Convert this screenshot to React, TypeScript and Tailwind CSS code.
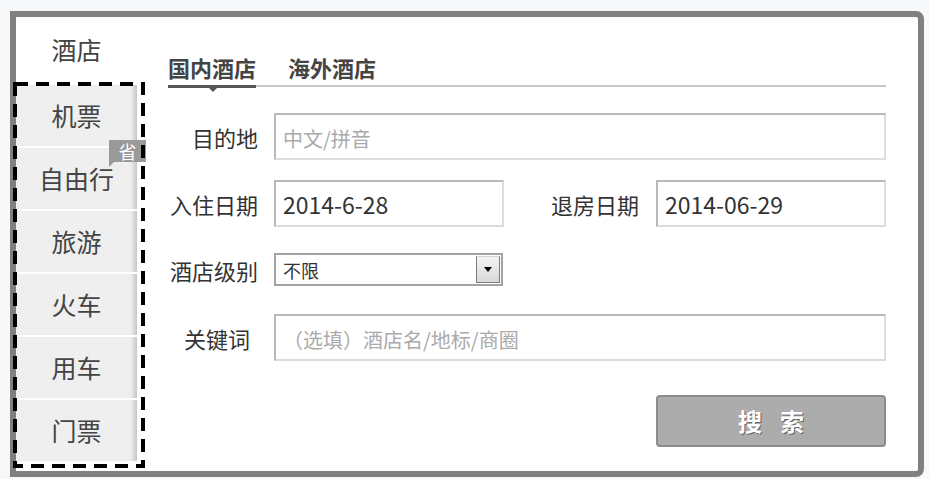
import React from "react";

const sideTabs = ["机票", "自由行", "旅游", "火车", "用车", "门票"];

const inputBox =
    "h-[47px] border-2 border-t-[#b9b9b9] border-l-[#b9b9b9] border-r-[#dcdcdc] border-b-[#dcdcdc] bg-white px-[7px] text-[23px] text-[#333] outline-none placeholder:text-[20px] placeholder:text-[#aaa]";

const Label: React.FC<{ text: string; className?: string }> = ({ text, className }) => (
    <span className={"w-[90px] shrink-0 text-right text-[22px] leading-[30px] text-[#333] " + (className || "")}>
        {text}
    </span>
);

const SideTab: React.FC<{ name: string }> = ({ name }) => (
    <div className="relative flex h-[63px] items-center justify-center border-t-2 border-white bg-[#efefef] text-[25px] text-[#444] shadow-[inset_-6px_0_4px_-3px_#c4c4c4]">
        {name}
        {name === "自由行" && (
            <span className="absolute -top-[8px] -right-[9px] flex h-[22px] w-[37px] items-center justify-center bg-[#9a9a9a] text-[18px] leading-none text-white">
                省
                <span className="absolute left-0 top-full h-0 w-0 border-t-[5px] border-r-[5px] border-t-[#9a9a9a] border-r-transparent" />
            </span>
        )}
    </div>
);

const App: React.FC = () => {
    return (
        <div className="min-h-[479px] w-full bg-[#f6f8f9] pt-[11px] pl-[10px] font-['Noto_Sans_CJK_SC',sans-serif]">
            <div className="relative flex h-[466px] w-[914px] rounded-tr-[8px] rounded-br-[8px] border-[6px] border-[#808080] bg-white">
                {/* left column */}
                <div className="flex w-[121px] shrink-0 flex-col">
                    <div className="flex h-[66px] items-center justify-center text-[25px] text-[#444]">酒店</div>
                    {sideTabs.map((t) => (
                        <SideTab key={t} name={t} />
                    ))}
                </div>

                {/* right column */}
                <div className="flex flex-1 flex-col pt-[36px] pl-[31px] pr-[33px]">
                    <div className="flex gap-[32px] border-b-2 border-[#c8c8c8]">
                        <div className="relative pb-[4px] text-[22px] font-bold leading-[28px] text-[#444]">
                            国内酒店
                            <span className="absolute left-0 right-0 top-full h-[3px] bg-[#555]" />
                            <span className="absolute left-[41px] top-[calc(100%+3px)] h-0 w-0 border-x-[4px] border-t-[4px] border-x-transparent border-t-[#555]" />
                        </div>
                        <div className="pb-[4px] text-[22px] font-bold leading-[28px] text-[#444]">海外酒店</div>
                    </div>

                    <div className="mt-[26px] flex items-center gap-[16px]">
                        <Label text="目的地" />
                        <input className={inputBox + " flex-1"} placeholder="中文/拼音" />
                    </div>

                    <div className="mt-[20px] flex items-center">
                        <Label text="入住日期" />
                        <input className={inputBox + " ml-[16px] w-[230px]"} defaultValue="2014-6-28" />
                        <Label text="退房日期" className="ml-[45px]" />
                        <input className={inputBox + " ml-[17px] w-[230px]"} defaultValue="2014-06-29" />
                    </div>

                    <div className="mt-[26px] flex items-center gap-[16px]">
                        <Label text="酒店级别" />
                        <div className="flex h-[33px] w-[229px] items-center border-2 border-[#a3a3a3] bg-white">
                            <span className="flex-1 pl-[7px] text-[18px] leading-none text-[#333]">不限</span>
                            <span className="mr-[1px] flex h-[27px] w-[24px] items-center justify-center border border-t-[#d6d6d6] border-l-[#7c7c7c] border-r-[#7c7c7c] border-b-[#7c7c7c] bg-gradient-to-b from-[#f4f4f4] to-[#d9d9d9]">
                                <span className="h-0 w-0 border-x-[4px] border-t-[5px] border-x-transparent border-t-black" />
                            </span>
                        </div>
                    </div>

                    <div className="mt-[28px] flex items-center gap-[16px]">
                        <Label text="关键词" className="pr-[8px]" />
                        <input className={inputBox + " h-[46px] flex-1"} placeholder="（选填）酒店名/地标/商圈" />
                    </div>

                    <button className="mt-[34px] flex h-[52px] w-[230px] items-center justify-center gap-[18px] self-end rounded-[4px] border-2 border-[#8c8c8c] bg-[#acacac] text-[24px] font-bold text-white [text-shadow:1px_1px_0_#666]">
                        <span>搜</span>
                        <span>索</span>
                    </button>
                </div>

                {/* dashed annotation over the side tabs */}
                <svg className="pointer-events-none absolute -left-[3px] top-[65px]" width="132" height="386">
                    <rect x="2" y="2" width="128" height="382" fill="none" stroke="#000" strokeWidth="4" strokeDasharray="13 8" />
                </svg>
            </div>
        </div>
    );
};

export default App;
